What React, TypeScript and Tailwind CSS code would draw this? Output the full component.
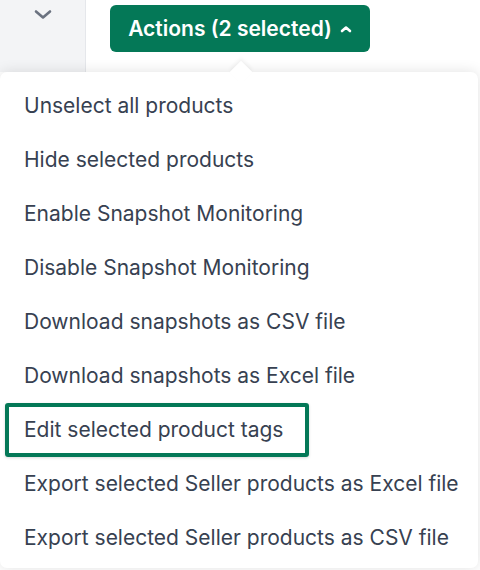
import React from 'react';

const items = [
  'Unselect all products',
  'Hide selected products',
  'Enable Snapshot Monitoring',
  'Disable Snapshot Monitoring',
  'Download snapshots as CSV file',
  'Download snapshots as Excel file',
  'Edit selected product tags',
  'Export selected Seller products as Excel file',
  'Export selected Seller products as CSV file',
];

const ActiveIndex = 6;

export default function App() {
  return (
    <div className="w-[480px] h-[570px] overflow-hidden bg-white font-[Inter] relative">
      <div className="flex h-[72px]">
        <div className="w-[86px] bg-[#f3f4f6] border-r border-[#e5e7eb] flex justify-center pt-[9px]">
          <svg className="w-[20px] h-[12px] text-[#6b7280]" viewBox="0 0 20 12" fill="none" stroke="currentColor" strokeWidth="2.6" strokeLinecap="round" strokeLinejoin="round">
            <path d="M3 2.5l7 6 7-6" />
          </svg>
        </div>
        <div className="flex-1 pl-[24px] pt-[5px]">
          <button className="h-[47px] w-[260px] rounded-[6px] bg-[#047857] text-white text-[21px] font-semibold flex items-center justify-center gap-[8px]">
            Actions (2 selected)
            <svg className="w-[12px] h-[8px]" viewBox="0 0 12 8" fill="none" stroke="currentColor" strokeWidth="2.6" strokeLinecap="round" strokeLinejoin="round">
              <path d="M2 6l4-3.5 4 3.5" />
            </svg>
          </button>
        </div>
      </div>

      <div className="relative w-[478px] h-[496px] bg-white rounded-[7px] shadow-[0_0_14px_rgba(0,0,0,0.12)] px-[5px] pt-[7px]">
        <div className="absolute -top-[8px] left-[233px] w-[16px] h-[16px] bg-white rotate-45 shadow-[-2px_-2px_4px_rgba(0,0,0,0.05)]" />
        <ul className="relative flex flex-col">
          {items.map((label, i) => (
            <li key={label} className="h-[54px] flex items-center">
              {i === ActiveIndex ? (
                <span className="h-[54px] flex items-center pl-[15px] pr-[22px] border-4 border-[#047857] rounded-[3px] shadow-[0_1px_3px_rgba(0,0,0,0.15)] text-[21px] text-[#374151]">
                  {label}
                </span>
              ) : (
                <span className="pl-[19px] text-[21px] text-[#374151]">{label}</span>
              )}
            </li>
          ))}
        </ul>
      </div>
    </div>
  );
}
